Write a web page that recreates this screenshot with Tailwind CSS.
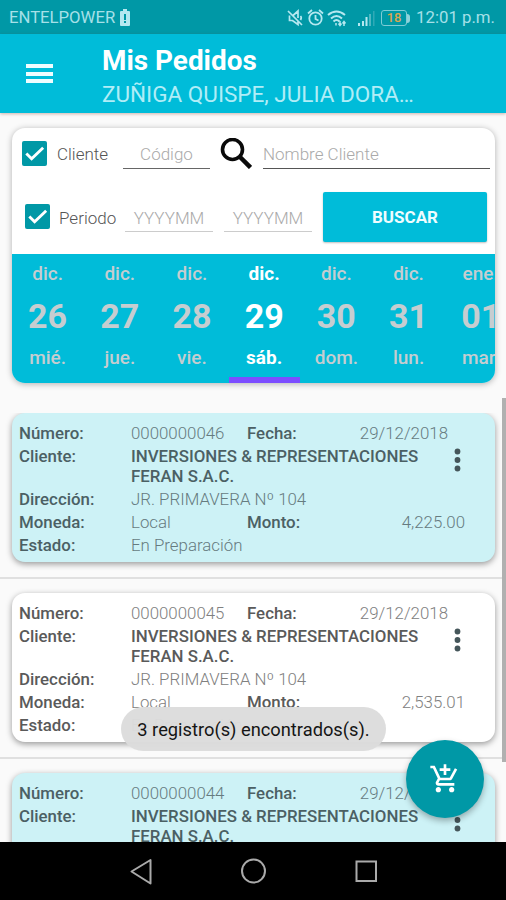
<!DOCTYPE html>
<html lang="es">
<head>
<meta charset="utf-8">
<title>Mis Pedidos</title>
<script src="https://cdn.jsdelivr.net/npm/@tailwindcss/browser@4"></script>
</head>
<body class="bg-[#fafafa] font-['Roboto','Liberation_Sans',sans-serif]">
<div class="relative w-[506px] h-[900px] overflow-hidden flex flex-col">
  <!-- Status bar -->
  <header class="h-[34px] shrink-0 bg-[#0098a6] flex items-center pt-[2px] pl-[9px] pr-[11px] text-[#a6e0e8] text-[16.700px]">
    <span>ENTELPOWER</span>
    <svg class="ml-[5px] mb-[2px] w-[10px] h-[17px]" viewBox="0 0 10 17"><path fill="#b5e8f0" d="M3 0h4v2h2q1 0 1 1v13q0 1-1 1H1q-1 0-1-1V3q0-1 1-1h2z"/><path fill="#0098a6" d="M4 5h2v6H4zM4 12h2v2H4z"/></svg>
    <div class="ml-auto flex items-center">
      <svg class="w-[17px] h-[18px]" viewBox="0 0 17 18" fill="none" stroke="#b5e8f0" stroke-width="1.700"><path d="M1 2l14 14M2.500 6.500v5h3l5.500 4v-4M6 6.500l5-4.500v7M13.500 7q1.500 1.500 0 4"/></svg>
      <svg class="ml-[3px] w-[17px] h-[18px]" viewBox="0 0 17 18" fill="none" stroke="#b5e8f0" stroke-width="1.800"><circle cx="8.500" cy="9.500" r="6.200"/><path d="M8.500 6v4l3 1.500M1 4.500l4-3.500M16 4.500l-4-3.500"/></svg>
      <svg class="ml-[3px] w-[20px] h-[18px]" viewBox="0 0 20 18" fill="none" stroke="#b5e8f0" stroke-width="2"><path d="M1 6q8.500-7 17 0M4 9.500q5.500-5 11 0M6.500 12.500q3-3 6 0"/><path stroke-width="1.500" d="M9 14v2.500M13 12v4M11.500 14.500l1.500 2 1.500-2M17 17v-4M15.500 14.500l1.500-2 1.500 2"/></svg>
      <svg class="ml-[11px] w-[17px] h-[17px]" viewBox="0 0 17 17"><path fill="#b5e8f0" d="M0 13h2v3H0zM4 11h2v5H4zM7.500 7h2v9h-2z"/><path fill="#4fb8c3" d="M11 4h2v12h-2z"/><path fill="#2fa9b6" d="M15 1h1.500v15H15z"/></svg>
      <div class="ml-[6px] w-[26px] h-[16px] border-[1.5px] border-[#7fccd5] rounded-[3px] text-[#d9a650] text-[13px] leading-[14px] text-center font-medium">18</div>
      <div class="w-[3px] h-[9px] bg-[#8fd3db] rounded-r-sm"></div>
      <span class="ml-[6px] text-[16.800px]">12:01 p.m.</span>
    </div>
  </header>
  <!-- App bar -->
  <div class="relative z-10 h-[79px] shrink-0 bg-[#00bcd9] shadow-[0_1px_3px_rgba(120,50,30,.35)] flex">
    <div class="ml-[26px] mt-[30px] w-[27px] h-[19px] flex flex-col justify-between">
      <i class="h-[4px] bg-[#effdff]"></i><i class="h-[4px] bg-[#effdff]"></i><i class="h-[4px] bg-[#effdff]"></i>
    </div>
    <div class="ml-[49px] pt-[10px]">
      <h1 class="text-white font-bold text-[27.900px] leading-[34px] whitespace-nowrap">Mis Pedidos</h1>
      <p class="text-[#b0edf7] text-[22.500px] leading-[32px] whitespace-nowrap">ZUÑIGA QUISPE, JULIA DORA…</p>
    </div>
  </div>
  <!-- Filter card -->
  <section class="mt-[15px] ml-[12px] w-[483px] h-[255px] shrink-0 rounded-[13px] bg-white shadow-[0_1px_6px_rgba(0,0,0,.3)]">
    <div class="w-full h-full overflow-hidden rounded-[13px] text-[17px] font-light text-[#555]">
      <div class="h-[57px] flex items-start pt-[10px] pl-[10px]">
        <svg class="mt-[3px] w-[25px] h-[25px]" viewBox="0 0 26 26"><rect width="26" height="26" rx="2" fill="#0098a6"/><path d="M4.500 13l5.500 5.500L22 7" fill="none" stroke="#fff" stroke-width="3"/></svg>
        <span class="ml-[10px] w-[66px] leading-[33px]">Cliente</span>
        <div class="w-[87px] h-[31px] border-b border-[#666] text-center text-[#aaa] leading-[33px]">Código</div>
        <svg class="ml-[10px] w-[32px] h-[31px]" viewBox="0 0 32 31" fill="none" stroke="#0a0a0a"><circle cx="12.500" cy="11.500" r="10" stroke-width="3.600"/><path d="M19.500 18.500l11 11" stroke-width="4.500"/></svg>
        <div class="ml-[11px] w-[227px] h-[31px] border-b border-[#555] text-[#aaa] leading-[33px]">Nombre Cliente</div>
      </div>
      <div class="h-[69px] flex items-start pt-[7px] pl-[13px]">
        <svg class="mt-[12px] w-[25px] h-[25px]" viewBox="0 0 26 26"><rect width="26" height="26" rx="2" fill="#0098a6"/><path d="M4.500 13l5.500 5.500L22 7" fill="none" stroke="#fff" stroke-width="3"/></svg>
        <span class="mt-[9px] ml-[9px] w-[66px] leading-[34px]">Periodo</span>
        <div class="mt-[9px] w-[88px] h-[31px] border-b border-[#ccc] text-center text-[#aaa] leading-[34px]">YYYYMM</div>
        <div class="mt-[9px] ml-[11px] w-[88px] h-[31px] border-b border-[#ccc] text-center text-[#aaa] leading-[34px]">YYYYMM</div>
        <div class="ml-[11px] w-[164px] h-[50px] rounded-[2px] bg-[#00bcd9] shadow-[0_1px_2px_rgba(0,0,0,.25)] text-center leading-[51px] font-bold text-[17px] text-[#effdff]">BUSCAR</div>
      </div>
      <div id="days" class="h-[129px] bg-[#00bcd9] flex"></div>
    </div>
  </section>
  <!-- Orders -->
  <main id="orders" class="mt-[30px] h-[429px] shrink-0 overflow-hidden"></main>
  <!-- Navigation bar -->
  <nav class="h-[58px] shrink-0 bg-black">
    <svg class="w-[506px] h-[58px]" viewBox="0 0 506 58" fill="none" stroke="#aaa" stroke-width="2"><path stroke-linejoin="round" d="M150.500 18v23.500L131.500 29.500z"/><circle cx="253.500" cy="29" r="11.500"/><rect x="356.500" y="19.500" width="19.500" height="19.500"/></svg>
  </nav>
  <!-- Scroll thumb -->
  <div class="absolute left-[502px] top-[398px] w-[4px] h-[364px] bg-[#b0b0b0]"></div>
  <!-- Toast -->
  <div class="absolute left-[121px] top-[707px] w-[265px] h-[44px] rounded-full bg-[#dcdcdc]/97 text-center leading-[46px] text-[18.300px] text-[#151515] whitespace-nowrap">3 registro(s) encontrados(s).</div>
  <!-- Floating button -->
  <div class="absolute left-[406px] top-[740px] w-[78px] h-[78px] rounded-full bg-[#0098a6] shadow-[0_3px_6px_rgba(0,0,0,.3)] flex items-center justify-center">
    <svg class="w-[32px] h-[32px]" viewBox="0 0 24 24" fill="#fff"><path d="M11 9h2V6h3V4h-3V1h-2v3H8v2h3v3zm-4 9c-1.100 0-1.990.9-1.990 2S5.900 22 7 22s2-.9 2-2-.9-2-2-2zm10 0c-1.100 0-1.990.9-1.990 2s.89 2 1.990 2 2-.9 2-2-.9-2-2-2zm-9.830-3.250l.03-.12.9-1.630h7.450c.75 0 1.410-.41 1.750-1.030l3.860-7.010L19.420 4h-.01l-1.100 2-2.760 5H8.530l-.13-.27L6.160 6l-.95-2-.94-2H1v2h2l3.600 7.590-1.350 2.450c-.16.280-.25.610-.25.960 0 1.100.9 2 2 2h12v-2H7.420c-.13 0-.25-.11-.25-.25z"/></svg>
  </div>
</div>
<script>
const days = [['dic.','26','mié.'],['dic.','27','jue.'],['dic.','28','vie.'],['dic.','29','sáb.'],['dic.','30','dom.'],['dic.','31','lun.'],['ene.','01','mar.']];
document.getElementById('days').innerHTML = days.map((d, i) => `
  <div class="w-[72.200px] shrink-0 text-center ${i === 0 ? '-ml-[0.500px]' : ''} ${i === 3 ? 'text-white' : 'text-[#c6cdd0]'}">
    <div class="${i === 3 ? 'font-bold' : 'font-medium'} h-[40px] leading-[39px] text-[19px]">${d[0]}</div>
    <div class="font-bold h-[44px] leading-[44px] text-[34px]">${d[1]}</div>
    <div class="${i === 3 ? 'font-bold' : 'font-medium'} h-[39px] leading-[40px] text-[19px]">${d[2]}</div>
    ${i === 3 ? '<div class="ml-[1px] w-[71px] h-[6px] bg-[#7c4dff]"></div>' : ''}
  </div>`).join('');
const orders = [['0000000046','4,225.00',1],['0000000045','2,535.01',0],['0000000044','3,380.00',1]];
document.getElementById('orders').innerHTML = orders.map(([n, m, tint], i) => `
  <div class="h-[180px]">
    <article class="relative ml-[12px] w-[483px] h-[149px] rounded-[13px] ${tint ? 'bg-[#cdf2f6]' : 'bg-white'} shadow-[0_2px_6px_rgba(0,0,0,.4)] pl-[7px] pt-[9px] grid grid-cols-[112px_116px_1fr] grid-rows-[23px_43px_23px_23px_23px] text-[16.850px] leading-[23px] font-light ${tint ? 'text-[#667b7f]' : 'text-[#808080]'}">
      <b class="font-medium ${tint ? 'text-[#4b6064]' : 'text-[#5a5a5a]'}">Número:</b><span>${n}</span><div class="flex justify-between pr-[47px]"><b class="font-medium ${tint ? 'text-[#4b6064]' : 'text-[#5a5a5a]'}">Fecha:</b><span>29/12/2018</span></div>
      <b class="font-medium ${tint ? 'text-[#4b6064]' : 'text-[#5a5a5a]'}">Cliente:</b><div class="col-span-2 font-medium leading-[20px] pt-[1px] ${tint ? 'text-[#4b6064]' : 'text-[#5a5a5a]'}">INVERSIONES &amp; REPRESENTACIONES<br>FERAN S.A.C.</div>
      <b class="font-medium ${tint ? 'text-[#4b6064]' : 'text-[#5a5a5a]'}">Dirección:</b><span class="col-span-2">JR. PRIMAVERA Nº 104</span>
      <b class="font-medium ${tint ? 'text-[#4b6064]' : 'text-[#5a5a5a]'}">Moneda:</b><span>Local</span><div class="flex justify-between pr-[30px]"><b class="font-medium ${tint ? 'text-[#4b6064]' : 'text-[#5a5a5a]'}">Monto:</b><span>${m}</span></div>
      <b class="font-medium ${tint ? 'text-[#4b6064]' : 'text-[#5a5a5a]'}">Estado:</b><span>En Preparación</span>
      <svg class="absolute left-[442px] top-[35px] w-[7px] h-[24px]" viewBox="0 0 7 24" fill="#45565a"><circle cx="3.500" cy="3.500" r="2.900"/><circle cx="3.500" cy="12" r="2.900"/><circle cx="3.500" cy="20.500" r="2.900"/></svg>
    </article>
    <div class="mt-[15px] h-[2px] bg-[#e0e0e0]"></div>
  </div>`).join('');
</script>
</body>
</html>
